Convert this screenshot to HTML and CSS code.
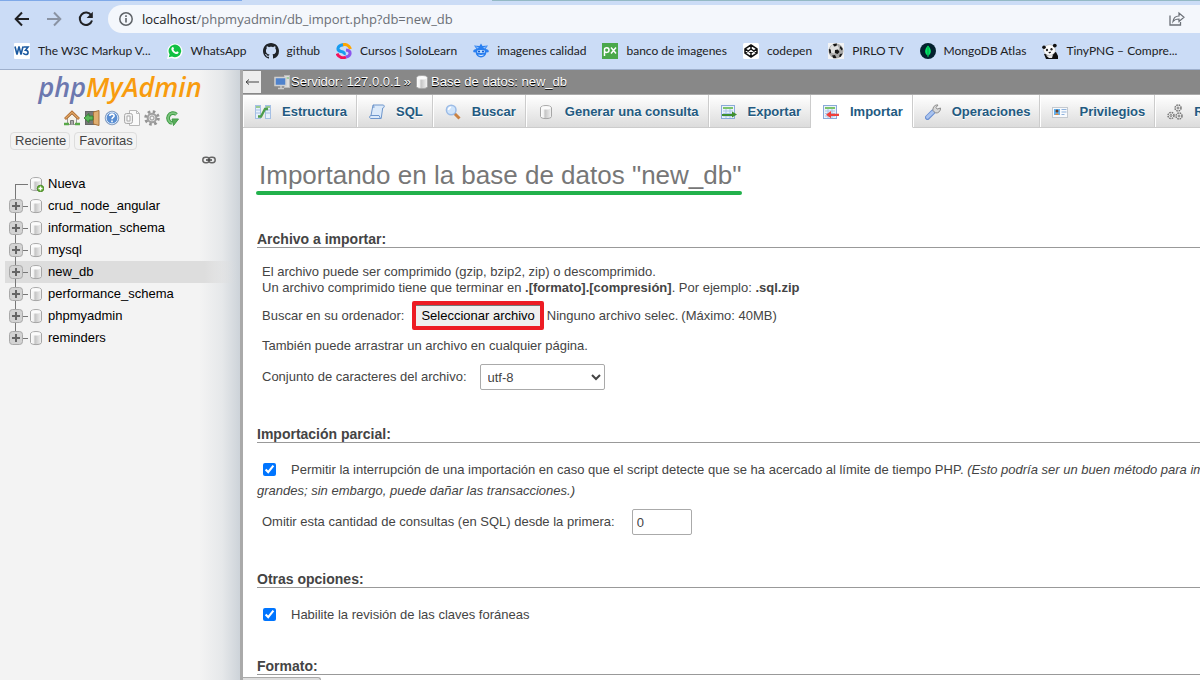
FILE: index.html
```html
<!DOCTYPE html>
<html lang="es">
<head>
<meta charset="utf-8">
<title>localhost / new_db | phpMyAdmin</title>
<link rel="stylesheet" href="styles.css">
</head>
<body>
<svg class="defs" aria-hidden="true">
  <defs>
    <linearGradient id="cyl" x1="0" x2="1" y1="0" y2="0"><stop offset="0" stop-color="#fff"/><stop offset=".3" stop-color="#f0f0f0"/><stop offset=".4" stop-color="#c4c4c4"/><stop offset=".7" stop-color="#dcdcdc"/><stop offset="1" stop-color="#f4f4f4"/></linearGradient>
    <symbol id="db" viewBox="0 0 16 16"><path d="M2.500 4c0-3.200 11-3.200 11 0v8.500c0 2.800-11 2.800-11 0z" fill="url(#cyl)" stroke="#a6a6a6"/><ellipse cx="8" cy="3.800" rx="4.800" ry="1.800" fill="#fbfbfb"/></symbol>
    <symbol id="plus" viewBox="0 0 14 14"><rect x=".5" y=".5" width="13" height="13" rx="3" fill="#d3d3d3" stroke="#a9a9a9"/><path d="M3 7h8M7 3v8" stroke="#666" stroke-width="2"/></symbol>
    <symbol id="sheet" viewBox="0 0 16 16"><rect x=".5" y="1.500" width="13" height="13" fill="#eaf2fb" stroke="#8aaad8"/><path d="M2 4h10" stroke="#7cc46c" stroke-width="2"/><path d="M2 7h10M2 9.500h10M2 12h10M5 5v9M9 5v9" stroke="#a9c4e8"/></symbol>
  </defs>
</svg>

<header class="browser">
  <div class="toolbar">
    <button class="nav-btn" aria-label="Atrás"><svg viewBox="0 0 16 16"><path d="M15 8H2M8 1.500L1.700 8 8 14.500" fill="none" stroke="#202124" stroke-width="2"/></svg></button>
    <button class="nav-btn" aria-label="Adelante"><svg viewBox="0 0 16 16"><path d="M1 8h13M8 1.500L14.300 8 8 14.500" fill="none" stroke="#8a93a3" stroke-width="2"/></svg></button>
    <button class="nav-btn" aria-label="Recargar"><svg viewBox="0 0 16 16"><path d="M13.300 4.500A6.200 6.200 0 1 0 14 9.500" fill="none" stroke="#202124" stroke-width="2"/><path d="M14.800 .8v6.200H8.600z" fill="#202124"/></svg></button>
    <div class="address">
      <svg class="info" viewBox="0 0 14 14"><circle cx="7" cy="7" r="6.200" fill="none" stroke="#5f6368" stroke-width="1.500"/><path d="M7 6v4.500M7 3.300v1.600" stroke="#5f6368" stroke-width="1.600"/></svg>
      <span class="url"><b>localhost</b>/phpmyadmin/db_import.php?db=new_db</span>
      <svg class="share" viewBox="0 0 16 16"><path d="M1 4.500v9.500h10.500v-3" fill="none" stroke="#6b7077" stroke-width="1.300"/><path d="M4 10.500C4.500 6.500 7 5 10 5V2l5 4.300-5 4.200V8C7.500 8 5.500 8.500 4 10.500z" fill="none" stroke="#6b7077" stroke-width="1.200"/></svg>
    </div>
  </div>
  <nav class="bookmarks">
    <a href="#"><svg viewBox="0 0 16 16"><rect width="16" height="16" rx="1" fill="#fff"/><path d="M1 3.500l2 8 2-8 2 8 2-8M9.500 4h4.500l-2.500 3.200c3.500.2 3.300 4.300 .2 4.300-1.200 0-2-.7-2.400-1.500" fill="none" stroke="#1c5aa0" stroke-width="1.600"/></svg>The W3C Markup V...</a>
    <a href="#"><svg viewBox="0 0 16 16"><path d="M0 16l1.200-4.200A7.600 7.600 0 1 1 4.500 15z" fill="#fff"/><path d="M1.800 14.200l.8-2.900A6.300 6.300 0 1 1 5 13.500z" fill="#10c143"/><path d="M5.300 4.300c.8-.5 1.200 0 1.700 1.500l-.6.900c.6 1.200 1.500 2 2.700 2.500l.9-1c1.600.7 1.900.9 1.400 1.900-.7 1.400-2.900 1.100-4.900-.4-2-1.700-3-4.100-1.200-5.400z" fill="#fff"/></svg>WhatsApp</a>
    <a href="#"><svg viewBox="0 0 16 16"><path fill="#1f2328" d="M8 0C3.580 0 0 3.580 0 8c0 3.540 2.290 6.530 5.470 7.590.4.070.55-.17.55-.38 0-.19-.01-.82-.01-1.490-2.010.37-2.530-.49-2.690-.94-.09-.23-.48-.94-.82-1.130-.28-.15-.68-.52-.01-.53.630-.01 1.080.58 1.230.82.720 1.210 1.870.87 2.330.66.070-.52.280-.87.510-1.070-1.780-.2-3.640-.89-3.640-3.950 0-.87.310-1.590.820-2.150-.08-.2-.36-1.020.08-2.120 0 0 .67-.21 2.200.82.640-.18 1.320-.27 2-.27s1.360.09 2 .27c1.530-1.040 2.200-.82 2.200-.82.440 1.100.160 1.920.080 2.120.510.560.820 1.270.820 2.150 0 3.070-1.870 3.750-3.650 3.950.290.250.540.730.540 1.480 0 1.070-.01 1.930-.01 2.200 0 .21.150.460.550.38A8 8 0 0 0 16 8c0-4.420-3.580-8-8-8z"/></svg>github</a>
    <a href="#"><svg viewBox="0 0 16 16" fill="none" stroke-width="3"><path d="M6 2C9 .8 13 1.500 14.500 6" stroke="#ffa400"/><path d="M7 1.800C1 2.500 .5 7.500 5 8.500c2.500.5 4 1.500 3 3.200" stroke="#189cf0"/><path d="M1 10.500C2.500 14.500 7 15.500 10 14" stroke="#f4125b"/><path d="M10 14c5.500-1.500 5.500-6.500 0-7" stroke="#8c55ec"/></svg>Cursos | SoloLearn</a>
    <a href="#"><svg viewBox="0 0 16 16"><path d="M8 .5l1.500 2.500 5.500-.5-2.500 3.500c2 0 3.500 1 3.300 2.500-.3 1-1.500 1-2.300.8-.5 3.200-2.500 5.200-5.500 5.200s-5-2-5.500-5.200c-.8.2-2 .2-2.300-.8C0 7 1.500 6 3.500 6L1 2.500 6.500 3z" fill="#2a7ff0"/><path d="M2 3l4 1.500-1.500 1zM14 3l-4 1.500 1.500 1z" fill="#8fc0fb"/><rect x="4" y="7" width="8" height="3" rx="1.500" fill="#bcdcff"/><circle cx="6" cy="8.500" r="1.100" fill="#115bd0"/><circle cx="10" cy="8.500" r="1.100" fill="#115bd0"/><path d="M5.500 12q2.500 1.200 5 0" stroke="#d8eaff" fill="none"/></svg>imagenes calidad</a>
    <a href="#"><svg viewBox="0 0 16 16"><rect width="16" height="16" fill="#4aa84a"/><path d="M2.500 13V6.500c0-2.500 4.500-2.500 4.500.5s-4 3-4.500 1M9 4.500l5 6M14 4.500l-5 6" fill="none" stroke="#fff" stroke-width="1.500"/></svg>banco de imagenes</a>
    <a href="#"><svg viewBox="0 0 16 16"><rect width="16" height="16" rx="1.500" fill="#fff"/><path d="M8 2l6 3.800v4.400L8 14l-6-3.800V5.800zM8 2v4M8 10v4M2 5.800l6 4.200 6-4.200M2 10.200L8 6l6 4.200" fill="none" stroke="#111" stroke-width="1.500" stroke-linejoin="round"/></svg>codepen</a>
    <a href="#"><svg viewBox="0 0 16 16"><rect width="16" height="16" fill="#f2f3f5"/><circle cx="8" cy="8" r="7.500" fill="#a8a8a8"/><circle cx="6.500" cy="6" r="4.500" fill="#e0e0e0"/><path d="M7 7l3-.5 1.500 2.500-2 2-2.700-1zM5 1l4-.6L8.500 3 6 3.500zM.8 6l2 .5L3 10l-1.500.5zM12.500 3l2.300 3-1 1.500-2-2.500zM4 12.500l3-.5 1.500 3-3 .3zM12 11l2.500-.5-2 3.500-1.500-.5z" fill="#151515"/></svg>PIRLO TV</a>
    <a href="#"><svg viewBox="0 0 16 16"><circle cx="8" cy="8" r="8" fill="#03202e"/><path d="M8 2.500c4 4 3.500 8 .4 10V14h-.8v-1.500c-3.100-2-3.600-6 .4-10z" fill="#00e466"/><path d="M8 4v9" stroke="#0a9a4a"/></svg>MongoDB Atlas</a>
    <a href="#"><svg viewBox="0 0 16 16"><path d="M2 11l12-2 2 4v3H4z" fill="#111"/><path d="M4 12.500l7-1-1 3.500H7z" fill="#e8e8e8"/><ellipse cx="7.500" cy="7" rx="6" ry="5.300" fill="#fafafa" stroke="#aaa" stroke-width=".5"/><circle cx="2" cy="4.300" r="1.800" fill="#111"/><circle cx="12.800" cy="2.600" r="1.900" fill="#111"/><ellipse cx="5" cy="7" rx="1.100" ry="1.300" fill="#222"/><ellipse cx="9.500" cy="6.300" rx="1.100" ry="1.300" fill="#222"/><path d="M6.800 9.500l1.800-.3-.7.800z" fill="#111" stroke="#111"/></svg>TinyPNG – Compre...</a>
  </nav>
</header>

<div class="app">
  <aside class="sidebar">
    <a class="logo" href="#"><span class="logo-php">php</span><span class="logo-my">MyAdmin</span></a>
    <div class="quick">
      <a href="#" aria-label="Inicio"><svg viewBox="0 0 16 16"><path d="M3.500 8v6.500h9V8L8 4z" fill="#f4f1e8" stroke="#999"/><path d="M6.500 14.500v-4h3v4" fill="#aaa" stroke="#777"/><path d="M1 9l7-6.700L15 9" fill="none" stroke="#b06a2c" stroke-width="2.800"/><path d="M1.500 8.500L8 2.300l6.500 6.200" fill="none" stroke="#e0a868" stroke-width="1.200"/><path d="M0 14h5M11 14h5" stroke="#58a848" stroke-width="2.500"/></svg></a>
      <a href="#" aria-label="Salir"><svg viewBox="0 0 16 16"><rect x="1.500" y="1.500" width="11" height="13" fill="#777" stroke="#666"/><path d="M9.500 2L15 .5v15L9.500 14z" fill="#e0ae70" stroke="#a8743c"/><path d="M0 8l5-4.500v2.500h4v4H5v2.500z" fill="#5cb85a" stroke="#2c7c2c" stroke-width=".8"/></svg></a>
      <a href="#" aria-label="Documentación"><svg viewBox="0 0 16 16"><circle cx="8" cy="8" r="6.800" fill="#5b8fd2" stroke="#8aa0bf"/><circle cx="8" cy="8" r="5.800" fill="none" stroke="#d4e4f8"/><path d="M5.800 6c.2-2.600 4.500-2.500 4.300 0C10 7.500 8 7.500 8 9.200M8 10.500v1.700" fill="none" stroke="#fff" stroke-width="1.600"/></svg></a>
      <a href="#" aria-label="SQL"><svg viewBox="0 0 16 16"><path d="M5.500 .5h7l3 3v12h-10z" fill="#fafafa" stroke="#b8b8b8"/><path d="M12.500 .5v3h3" fill="none" stroke="#b8b8b8"/><rect x=".5" y="3.500" width="8" height="10" rx="2" fill="#eee" stroke="#aaa"/><path d="M3 6v5h3V6z" fill="#fff" stroke="#aaa"/></svg></a>
      <a href="#" aria-label="Configuración"><svg viewBox="0 0 16 16"><circle cx="8" cy="8" r="6.300" fill="none" stroke="#949494" stroke-width="3" stroke-dasharray="2.500 2.448"/><circle cx="8" cy="8" r="4.300" fill="#e0e0e0" stroke="#a0a0a0" stroke-width="2"/><circle cx="8" cy="8" r="2" fill="#f3f3f3" stroke="#999"/></svg></a>
      <a href="#" aria-label="Recargar"><svg viewBox="0 0 16 16"><path d="M12.500 4.500A5 5 0 1 0 8 13" fill="none" stroke="#3f9a45" stroke-width="3.800"/><path d="M12.300 4.300A5 5 0 1 0 8 13" fill="none" stroke="#7cc67e" stroke-width="1.800"/><path d="M8 9h6.500l-5 6.500z" fill="#58ac5a" stroke="#3f9a45"/></svg></a>
    </div>
    <div class="recent"><button>Reciente</button><button>Favoritas</button></div>
    <div class="link-row"><svg class="link-icon" viewBox="0 0 14 8"><rect x=".8" y="1.300" width="6.500" height="5.400" rx="2.700" fill="none" stroke="#666" stroke-width="1.500"/><rect x="6.700" y="1.300" width="6.500" height="5.400" rx="2.700" fill="none" stroke="#666" stroke-width="1.500"/><path d="M4 4h6" stroke="#444" stroke-width="1.500"/></svg></div>
    <ul class="tree">
      <li class="new"><span class="branch"></span><svg class="db" viewBox="0 0 16 16"><use href="#db"/><circle cx="12.500" cy="12.500" r="3.300" fill="#64ad36" stroke="#3f7f1c" stroke-width=".8"/><path d="M10.500 12.500h4M12.500 10.500v4" stroke="#fff" stroke-width="1.300"/></svg><a href="#">Nueva</a></li>
      <li><span class="branch"><svg><use href="#plus"/></svg></span><svg class="db"><use href="#db"/></svg><a href="#">crud_node_angular</a></li>
      <li><span class="branch"><svg><use href="#plus"/></svg></span><svg class="db"><use href="#db"/></svg><a href="#">information_schema</a></li>
      <li><span class="branch"><svg><use href="#plus"/></svg></span><svg class="db"><use href="#db"/></svg><a href="#">mysql</a></li>
      <li class="selected"><span class="branch"><svg><use href="#plus"/></svg></span><svg class="db"><use href="#db"/></svg><a href="#">new_db</a></li>
      <li><span class="branch"><svg><use href="#plus"/></svg></span><svg class="db"><use href="#db"/></svg><a href="#">performance_schema</a></li>
      <li><span class="branch"><svg><use href="#plus"/></svg></span><svg class="db"><use href="#db"/></svg><a href="#">phpmyadmin</a></li>
      <li class="last"><span class="branch"><svg><use href="#plus"/></svg></span><svg class="db"><use href="#db"/></svg><a href="#">reminders</a></li>
    </ul>
  </aside>

  <main class="content">
    <div class="crumbs">
      <button class="collapse" aria-label="Ocultar panel"><svg viewBox="0 0 14 8"><path d="M1 4h13M4 1.500L1 4l3 2.500" fill="none" stroke="#444"/></svg></button>
      <svg class="crumb-icon" viewBox="0 0 16 16"><rect x="10.500" y="1.500" width="5" height="12" fill="#ddd" stroke="#bbb"/><path d="M11 4h4" stroke="#6b6"/><rect x="1" y="3.500" width="11" height="8" fill="#4f82cc" stroke="#d0d0d0" stroke-width="1.500"/><path d="M4 14.500h6M7 12v2" stroke="#ccc" stroke-width="1.500"/></svg>
      <a href="#">Servidor: 127.0.0.1</a><span class="sep">»</span>
      <svg class="crumb-icon"><use href="#db"/></svg>
      <a href="#">Base de datos: new_db</a>
    </div>
    <nav class="tabs">
      <a href="#"><svg viewBox="0 0 16 16"><rect x=".5" y="1.500" width="5" height="13" fill="#e6f0fb" stroke="#a4bfe4"/><rect x="10.500" y="1.500" width="5" height="13" fill="#e6f0fb" stroke="#a4bfe4"/><path d="M1 3h4M11 3h4" stroke="#80c070" stroke-width="1.500"/><path d="M1 6h4M1 9h4M11 6h4M11 9h4" stroke="#a4bfe4"/><path d="M3 12.500h3L10 5h3" fill="none" stroke="#4d9c4b" stroke-width="2.300"/></svg>Estructura</a>
      <a href="#"><svg viewBox="0 0 16 16"><path d="M4 1h10.500c1.500 1 .5 3-.8 3l-1.500 10.500H1.500c-1.500-.5-1-3 .5-3z" fill="#dceafa" stroke="#6e96cc"/><path d="M2 11.500h8l1.500 3M4 1c1 0 1 2 .8 3" fill="none" stroke="#6e96cc"/></svg>SQL</a>
      <a href="#"><svg viewBox="0 0 16 16"><path d="M9.500 9.500l5 5" stroke="#c98244" stroke-width="3"/><circle cx="6.200" cy="6" r="4.800" fill="#cfe4fb" stroke="#9bbbe6" stroke-width="1.500"/><path d="M3.500 6A3 3 0 0 1 6 3.200" fill="none" stroke="#fff" stroke-width="1.500"/></svg>Buscar</a>
      <a href="#"><svg><use href="#db"/></svg>Generar una consulta</a>
      <a href="#"><svg viewBox="0 0 16 16"><use href="#sheet"/><path d="M1 10h10V7.500l5 3-5 3V12H1z" fill="#3f8f2f"/></svg>Exportar</a>
      <a href="#" class="active"><svg viewBox="0 0 16 16"><use href="#sheet"/><path d="M16 9.800H8V7l-5 3.800 5 3.500V12h8z" fill="#f0403c"/></svg>Importar</a>
      <a href="#"><svg viewBox="0 0 16 16"><path d="M2.500 13.500L8 8" stroke="#6a8fd2" stroke-width="5" stroke-linecap="round"/><path d="M2.500 13.200L7.800 8.200" stroke="#a9c3ee" stroke-width="3" stroke-linecap="round"/><path d="M8 6.500C7.500 3 10 .5 13 1l-2 2.500 1.200 1.600L15.500 4c.3 3-2 5.300-5 5z" fill="#d8d8d8" stroke="#8c8c8c"/></svg>Operaciones</a>
      <a href="#"><svg viewBox="0 0 16 16"><rect x=".5" y="3.500" width="15" height="10" fill="#f8fafd" stroke="#c4c9cf"/><rect x="2" y="5" width="6" height="6" fill="#5fb0ef"/><circle cx="5" cy="7" r="1.500" fill="#6b3d20"/><path d="M3 11q2-3.500 4 0z" fill="#e28a3c"/><path d="M9.500 5.500h5M9.500 8h5M9.500 10.500h3" stroke="#8fb2dc"/></svg>Privilegios</a>
      <a href="#"><svg viewBox="0 0 16 16" fill="#f5f5f5" stroke="#777"><circle cx="11" cy="4" r="3" stroke-width="1.500" stroke-dasharray="1.600 .8"/><circle cx="4" cy="11.500" r="3" stroke-width="1.500" stroke-dasharray="1.600 .8"/><circle cx="12" cy="12" r="3" stroke-width="1.500" stroke-dasharray="1.600 .8"/><circle cx="11" cy="4" r="1"/><circle cx="4" cy="11.500" r="1"/><circle cx="12" cy="12" r="1"/></svg>Rutinas</a>
    </nav>

    <form class="import">
      <h2>Importando en la base de datos "new_db"</h2>

      <section>
        <h3>Archivo a importar:</h3>
        <div class="body">
          <p>El archivo puede ser comprimido (gzip, bzip2, zip) o descomprimido.<br>Un archivo comprimido tiene que terminar en <strong>.[formato].[compresión]</strong>. Por ejemplo: <strong>.sql.zip</strong></p>
          <div class="row file-row"><span id="file-label" class="file-label">Buscar en su ordenador:</span><button type="button" class="file-btn" aria-describedby="file-label">Seleccionar archivo</button><span class="file-name">Ninguno archivo selec.</span><span>(Máximo: 40MB)</span></div>
          <p class="drag">También puede arrastrar un archivo en cualquier página.</p>
          <div class="row charset-row"><label for="charset">Conjunto de caracteres del archivo:</label><select id="charset"><option>utf-8</option></select></div>
        </div>
      </section>

      <section>
        <h3>Importación parcial:</h3>
        <div class="check-line"><input type="checkbox" id="interrupt" checked><label for="interrupt">Permitir la interrupción de una importación en caso que el script detecte que se ha acercado al límite de tiempo PHP. <em>(Esto podría ser un buen método para importar archivos<br>grandes; sin embargo, puede dañar las transacciones.)</em></label></div>
        <div class="row skip-row"><label for="skip">Omitir esta cantidad de consultas (en SQL) desde la primera:</label><input type="text" id="skip" value="0"></div>
      </section>

      <section class="options">
        <h3>Otras opciones:</h3>
        <div class="check-line"><input type="checkbox" id="fk" checked><label for="fk">Habilite la revisión de las claves foráneas</label></div>
      </section>

      <section>
        <h3>Formato:</h3>
      </section>
    </form>
    <div class="console"></div>
  </main>
</div>
</body>
</html>
```

FILE: styles.css
```css
* { box-sizing: border-box; }

body {
  margin: 0;
  height: 100vh;
  display: flex;
  flex-direction: column;
  overflow: hidden;
  background: #fff;
  color: #444;
  font: 13px/16px "Liberation Sans", Arial, sans-serif;
}

a { color: inherit; text-decoration: none; }
button, input, select { font: inherit; color: inherit; }
svg { display: block; flex: none; }
.defs { position: absolute; width: 0; height: 0; }

/* Browser chrome */
.browser {
  flex: none;
  background: linear-gradient(90deg, #7fa9e8 242px, #cbdcf6 242px, #cbdcf6 492px, #94b9c4 492px) top / 100% 1px no-repeat #cbdcf6;
  border-bottom: 1px solid #9fb0cc;
  font-family: "Open Sans", "Noto Sans", sans-serif;
  color: #202124;
}
.toolbar {
  display: flex;
  align-items: center;
  gap: 16px;
  padding: 5px 0 0 14px;
}
.nav-btn { width: 16px; height: 16px; padding: 0; border: 0; background: none; }
.nav-btn svg { width: 16px; height: 16px; }
.address {
  flex: 1;
  display: flex;
  align-items: center;
  gap: 9px;
  height: 28px;
  margin-left: -2px;
  padding: 0 15px 0 11px;
  border-radius: 14px 0 0 14px;
  background: #f4f7fc;
}
.info { width: 14px; height: 14px; }
.url { font-size: 13px; color: #6b6f76; }
.url b { font-weight: 400; color: #202124; }
.share { width: 16px; height: 16px; margin-left: auto; }
.bookmarks {
  display: flex;
  gap: 16px;
  height: 36px;
  padding: 0 14px;
  white-space: nowrap;
  font-family: Lato, "Open Sans", sans-serif;
  font-size: 12px;
}
.bookmarks a { display: flex; align-items: center; gap: 8px; }
.bookmarks svg { width: 16px; height: 16px; }

.app { flex: 1; display: flex; min-height: 0; }

/* Navigation panel */
.sidebar {
  flex: none;
  width: 243px;
  border-right: 3px solid #aaa;
  background: linear-gradient(90deg, #f3f3f3 200px, #e6e8ea 222px, #cdd3d9 240px);
  color: #000;
}
.logo {
  display: flex;
  justify-content: center;
  height: 40px;
  font: italic 600 27px/34px "Open Sans", sans-serif;
}
.logo-php { color: #6c78af; }
.logo-my { color: #f89c0e; }
.quick { display: flex; gap: 4px; padding-left: 64px; }
.quick svg { width: 16px; height: 16px; }
.recent { display: flex; gap: 4px; padding: 6px 10px 0; }
.recent button {
  height: 18px;
  padding: 0 3px 0 4px;
  border: 1px solid #ddd;
  border-radius: 4px;
  background: #f3f3f3;
  color: #444;
  line-height: 16px;
}
.link-row { display: flex; justify-content: flex-end; padding: 6px 24px 9px 0; }
.link-icon { width: 14px; height: 8px; }
.tree { margin: 0 4px 0 5px; padding: 0; list-style: none; }
.tree li { display: flex; align-items: center; height: 22px; padding-left: 4px; }
.tree .selected { background: linear-gradient(90deg, #ddd 200px, rgba(221, 221, 221, 0)); }
.branch {
  display: flex;
  align-items: center;
  width: 19px;
  height: 22px;
  background: linear-gradient(#777, #777) 6px 0 / 1px 100% no-repeat, linear-gradient(#777, #777) 6px 11px / 13px 1px no-repeat;
}
.new .branch { background-position: 6px 11px, 6px 11px; }
.last .branch { background-size: 1px 50%, 13px 1px; }
.branch svg { width: 14px; height: 14px; }
.db { width: 16px; height: 16px; margin-right: 4px; }

/* Main panel */
.content { flex: 1; min-width: 0; position: relative; overflow: hidden; }
.crumbs {
  display: flex;
  align-items: center;
  height: 24px;
  background: #888;
  color: #fff;
  text-shadow: 0 1px 0 #000;
}
.collapse {
  width: 18px;
  height: 22px;
  padding: 0 0 0 2px;
  border: 0;
  margin-right: 13px;
  background: #eee;
}
.collapse svg { width: 14px; height: 8px; }
.crumb-icon { width: 16px; height: 16px; margin-right: 1px; }
.sep { margin: 0 3px; }
.tabs {
  display: flex;
  height: 34px;
  border-top: 1px solid #aaa;
  color: #235a81;
  font-weight: 700;
  white-space: nowrap;
}
.tabs a {
  flex: none;
  display: flex;
  align-items: center;
  gap: 11px;
  padding: 1px 9px 0 12px;
  border: solid #ccc;
  border-width: 0 1px 1px 0;
  background: linear-gradient(#fff, #dcdcdc);
  box-shadow: inset 1px 0 #fff;
  text-shadow: 0 1px 0 #fff;
}
.tabs .active { background: #fff; border-bottom-color: #fff; }
.tabs svg { width: 16px; height: 16px; }

/* Import form */
.import { padding: 31px 0 0 14px; white-space: nowrap; }
h2 {
  width: max-content;
  margin: 0 0 36px;
  padding: 0 2px;
  color: #777;
  font-size: 26px;
  font-weight: 400;
  line-height: 32px;
}
h2::after {
  content: "";
  display: block;
  height: 4px;
  margin: 0 -1px 0 -3px;
  border-radius: 2px;
  background: #22b14c;
}
h3 {
  margin: 0;
  border-bottom: 1px solid #999;
  font-size: 14px;
  line-height: 16px;
}
section { margin-bottom: 36px; }
.options { margin-bottom: 33px; }
p { margin: 0; }
.body { padding: 16px 0 0 5px; }
.row { display: flex; align-items: center; }
.file-row { margin-top: 5px; }
.file-label { margin-right: 8px; }
.file-btn {
  height: 29px;
  padding: 0 5px;
  border: 4px solid #ed1c24;
  border-radius: 2px;
  background: #efefef;
  box-shadow: inset 0 1px #777;
  color: #000;
}
.file-name { margin: 0 3px; }
.drag { margin-top: 8px; }
.charset-row { gap: 13px; margin-top: 10px; }
select {
  width: 125px;
  height: 26px;
  padding: 0 3px;
  border: 1px solid #aaa;
  border-radius: 2px;
  background: #fff;
}
.check-line { padding-top: 16px; line-height: 21px; }
.check-line input { width: 13px; height: 13px; margin: 0 15px 0 6px; vertical-align: -2px; }
.skip-row { gap: 17px; padding: 8px 0 0 5px; }
.skip-row input {
  width: 60px;
  height: 26px;
  padding: 0 4px;
  border: 1px solid #aaa;
  border-radius: 2px;
}
.console {
  position: absolute;
  left: 0;
  bottom: 0;
  width: 78px;
  height: 3px;
  border: solid #aaa;
  border-width: 1px 1px 0 0;
  border-radius: 0 3px 0 0;
  background: #ddd;
}
```
